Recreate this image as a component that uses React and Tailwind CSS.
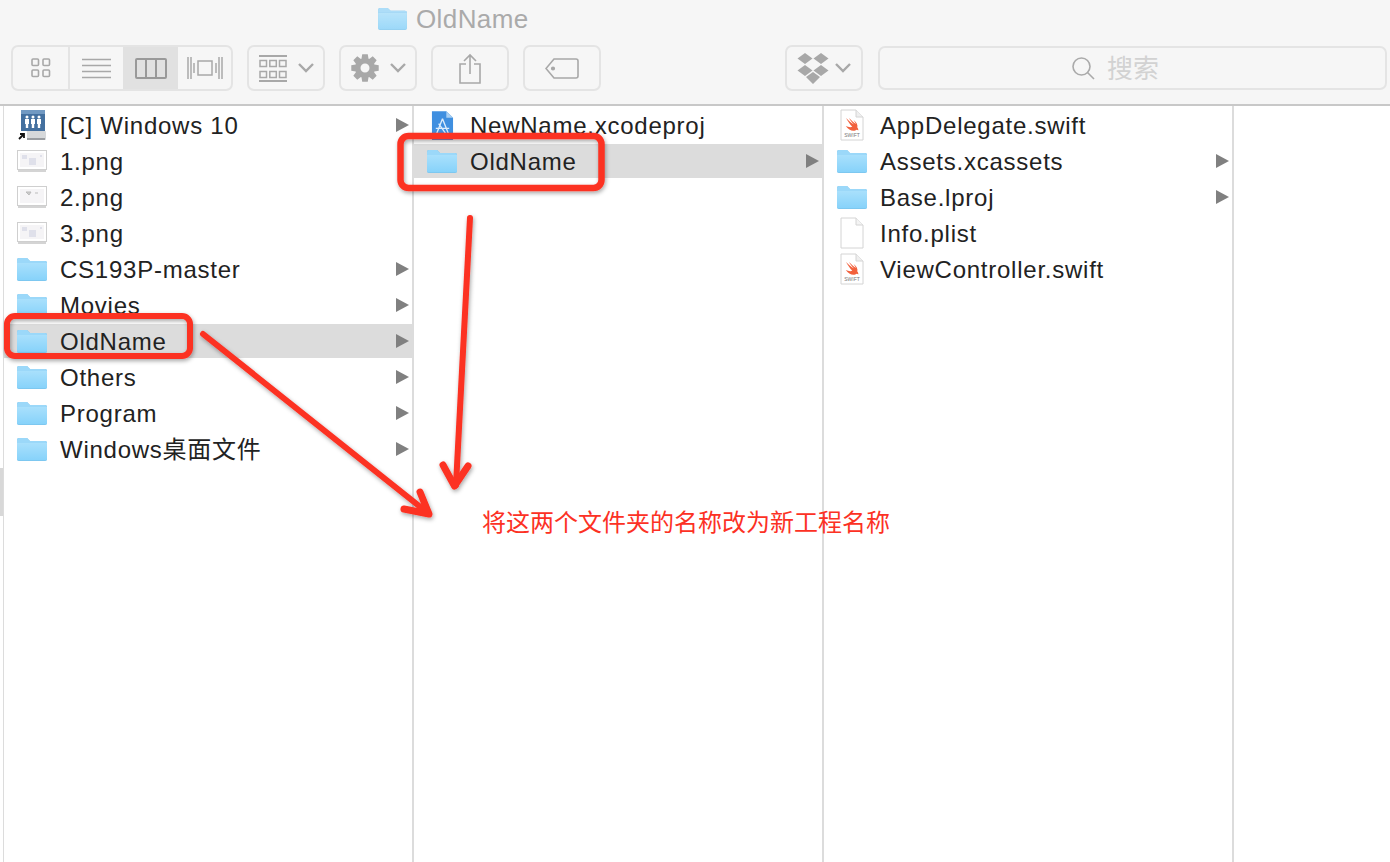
const font = "font-['Liberation_Sans','Noto_Sans_CJK_SC',sans-serif]"

const iconGray = "#a8a8a8"

function Folder({ className = "w-[32px] h-[25px]" }) {
    return (
        <svg viewBox="0 0 32 25" className={className}>
            <defs>
                <linearGradient id="folderBody" x1="0" y1="0" x2="0" y2="1">
                    <stop offset="0" stopColor="#a9e0fc" />
                    <stop offset="1" stopColor="#86d2fa" />
                </linearGradient>
            </defs>
            <path d="M1 3a2 2 0 0 1 2-2h8l3 3h15a2 2 0 0 1 2 2v16a2 2 0 0 1-2 2H3a2 2 0 0 1-2-2z" fill="#74bde6" />
            <path d="M1 6h30v16a1.500 1.500 0 0 1-1.500 1.500h-27A1.500 1.500 0 0 1 1 22z" fill="url(#folderBody)" />
            <path d="M1 3a2 2 0 0 1 2-2h8l3 3h15a2 2 0 0 1 2 2H1z" fill="#9bd8f9" />
        </svg>
    )
}

function Thumb({ variant }) {
    return (
        <svg viewBox="0 0 30 24" className="w-[30px] h-[24px]">
            <rect x="0.500" y="1.500" width="29" height="19" fill="#fff" stroke="#cfcfcf" />
            <rect x="1" y="21" width="28" height="2" fill="#aaa" opacity="0.5" />
            <rect x="3" y="4" width="24" height="14" fill="#f5f4f6" />
            {variant === 2 ? (
                <path d="M9 7h5l-2 3zM18 8h3" stroke="#bbb" fill="#ccc" />
            ) : (
                <path d="M5 6h5v4H5zM12 9h7v7h-7zM23 6h2v2h-2z" fill="#dfe0ea" />
            )}
        </svg>
    )
}

function DriveIcon() {
    return (
        <svg viewBox="0 0 30 32" className="w-[30px] h-[32px]">
            <rect x="4" y="1" width="24" height="23" rx="1" fill="#44709f" />
            <rect x="4" y="1" width="24" height="4" fill="#7199c2" />
            <g fill="#fff">
                <circle cx="10" cy="8" r="1.500" />
                <circle cx="16" cy="8" r="1.500" />
                <circle cx="22" cy="8" r="1.500" />
                <path d="M8 10h4v5h-.800v4h-2.400v-4H8zM14 10h4v5h-.800v4h-2.400v-4H14zM20 10h4v5h-.800v4h-2.400v-4H20z" />
            </g>
            <rect x="3" y="22" width="26" height="9" rx="1" fill="#d6d8da" />
            <rect x="4" y="29" width="24" height="2" fill="#9a9da1" />
            <rect x="0" y="22" width="10" height="10" rx="1" fill="#fff" />
            <path d="M2 30l4-4M3 25h4v4" stroke="#111" strokeWidth="1.800" fill="none" />
        </svg>
    )
}

function SwiftFile() {
    return (
        <svg viewBox="0 0 24 32" className="w-[24px] h-[32px]">
            <path d="M1 1h15l7 7v23H1z" fill="#fff" stroke="#d4d4d4" />
            <path d="M16 1v7h7" fill="#efefef" stroke="#d4d4d4" />
            <path d="M6 9c3 3 5 5 8 6.500-2.500-2.500-4-4.500-5-6.500 3 3 5 5 7 6-.800-1.500-1.500-2.500-2.500-4 3 2 4.500 5 3.800 7.500 1 1 1 2 1 3-1-1-2-1-3 0-3 1-7-.500-9.500-4.500 2 1 4.500 1.500 6.500.800C10 15.500 8 12.500 6 9z" fill="#f2603c" />
            <text x="12" y="28" textAnchor="middle" fontSize="5" fill="#777" fontFamily="Liberation Sans">SWIFT</text>
        </svg>
    )
}

function PlainFile() {
    return (
        <svg viewBox="0 0 24 32" className="w-[24px] h-[32px]">
            <path d="M1 1h15l7 7v23H1z" fill="#fff" stroke="#d4d4d4" />
            <path d="M16 1v7h7" fill="#f4f4f4" stroke="#d4d4d4" />
        </svg>
    )
}

function XcodeFile() {
    return (
        <svg viewBox="0 0 24 32" className="w-[23px] h-[31px]">
            <path d="M1 1h15l7 7v23H1z" fill="#3f8fe0" />
            <path d="M16 1v7h7z" fill="#a9cff2" />
            <path d="M12 9l-6 15M12 9l6 15M5 19h14M8 14l7 10" stroke="#dcecfb" strokeWidth="1.400" fill="none" />
        </svg>
    )
}

function Chevron() {
    return (
        <svg width="16" height="10" viewBox="0 0 16 10" fill="none" stroke={iconGray} strokeWidth="2.400" className="shrink-0">
            <path d="M1 1l7 7 7-7" />
        </svg>
    )
}

// 8 teeth gear, outer and inner radius alternate around the center
const gearPoints = Array.from({ length: 8 }).flatMap((_, i) => {
    const a = (i * Math.PI) / 4
    const spots = [
        [10, a - 0.36],
        [14, a - 0.2],
        [14, a + 0.2],
        [10, a + 0.36],
    ]
    return spots.map(([r, t]) => `${(14 + r * Math.sin(t)).toFixed(2)} ${(14 - r * Math.cos(t)).toFixed(2)}`)
})
const gearPath = `M${gearPoints.join("L")}zM14 9.500a4.500 4.500 0 1 0 0 9 4.500 4.500 0 0 0 0-9z`

function Row({ icon, name, arrow, selected }) {
    return (
        <div className={`flex items-center h-[34px] pl-[12px] pr-[3px] ${selected ? "bg-[#dcdcdc]" : ""}`}>
            <div className="flex justify-center shrink-0 w-[32px]">{icon}</div>
            <span className="ml-[12px] pt-[2px] text-[24px] tracking-[0.75px] leading-none text-[#222] whitespace-nowrap">{name}</span>
            {arrow && (
                <span className="ml-auto w-0 h-0 border-y-[7px] border-y-transparent border-l-[13px] border-l-[#808080]" />
            )}
        </div>
    )
}

const col1 = [
    { icon: <DriveIcon />, name: "[C] Windows 10", arrow: true },
    { icon: <Thumb variant={1} />, name: "1.png" },
    { icon: <Thumb variant={2} />, name: "2.png" },
    { icon: <Thumb variant={3} />, name: "3.png" },
    { icon: <Folder />, name: "CS193P-master", arrow: true },
    { icon: <Folder />, name: "Movies", arrow: true },
    { icon: <Folder />, name: "OldName", arrow: true, selected: true },
    { icon: <Folder />, name: "Others", arrow: true },
    { icon: <Folder />, name: "Program", arrow: true },
    { icon: <Folder />, name: "Windows桌面文件", arrow: true },
]

const col2 = [
    { icon: <XcodeFile />, name: "NewName.xcodeproj" },
    { icon: <Folder />, name: "OldName", arrow: true, selected: true },
]

const col3 = [
    { icon: <SwiftFile />, name: "AppDelegate.swift" },
    { icon: <Folder />, name: "Assets.xcassets", arrow: true },
    { icon: <Folder />, name: "Base.lproj", arrow: true },
    { icon: <PlainFile />, name: "Info.plist" },
    { icon: <SwiftFile />, name: "ViewController.swift" },
]

function Column({ rows }) {
    return (
        <div className="w-[410px] shrink-0 border-r-2 border-[#dcdcdc] pt-[2px] flex flex-col gap-[2px]">
            {rows.map((r) => (
                <Row key={r.name} {...r} />
            ))}
        </div>
    )
}

function ToolButton({ children, className = "" }) {
    return (
        <div className={`w-[78px] h-[46px] shrink-0 rounded-[7px] border-2 border-[#e4e4e4] bg-[#f6f6f6] flex items-center justify-center ${className}`}>
            {children}
        </div>
    )
}

export default function App() {
    return (
        <div className={`relative w-[1390px] h-[862px] overflow-hidden bg-white ${font}`}>
            {/* toolbar */}
            <div className="h-[106px] bg-[#f6f6f6] border-b-2 border-[#c8c8c8]">
                <div className="h-[38px] flex items-center pl-[377px]">
                    <Folder className="w-[31px] h-[24px] opacity-80" />
                    <span className="ml-[8px] text-[26px] tracking-[0.4px] text-[#aaaaaa] leading-none">OldName</span>
                </div>
                <div className="flex items-center mt-[7px] pl-[11px]">
                    <div className="flex w-[222px] h-[46px] rounded-[7px] border-2 border-[#e4e4e4] overflow-hidden">
                        <div className="w-[57px] border-r-2 border-[#e4e4e4] flex items-center justify-center">
                            <svg width="20" height="20" viewBox="0 0 20 20" fill="none" stroke={iconGray} strokeWidth="1.600">
                                <rect x="1" y="1" width="6.500" height="6.500" rx="1" />
                                <rect x="12" y="1" width="6.500" height="6.500" rx="1" />
                                <rect x="1" y="12" width="6.500" height="6.500" rx="1" />
                                <rect x="12" y="12" width="6.500" height="6.500" rx="1" />
                            </svg>
                        </div>
                        <div className="w-[53px] flex items-center justify-center">
                            <svg width="29" height="21" viewBox="0 0 29 21" stroke={iconGray} strokeWidth="1.600">
                                <path d="M0 1.500h29M0 7.500h29M0 13.500h29M0 19.500h29" />
                            </svg>
                        </div>
                        <div className="w-[55px] bg-[#e1e1e1] flex items-center justify-center">
                            <svg width="32" height="21" viewBox="0 0 32 21" fill="none" stroke="#999" strokeWidth="2">
                                <rect x="1" y="1" width="30" height="19" rx="1" />
                                <path d="M11 1v19M21 1v19" />
                            </svg>
                        </div>
                        <div className="flex-1 flex items-center justify-center">
                            <svg width="36" height="22" viewBox="0 0 36 22" fill="none" stroke={iconGray} strokeWidth="1.500">
                                <rect x="11" y="4" width="14" height="14" />
                                <path d="M1 0v22M4 0v22M35 0v22M32 0v22M7 6v10M29 6v10" />
                            </svg>
                        </div>
                    </div>
                    <ToolButton className="ml-[14px] gap-[11px]">
                        <svg width="28" height="27" viewBox="0 0 28 27" fill="none" stroke={iconGray} strokeWidth="1.500">
                            <path d="M0 1h28M0 26h28" strokeWidth="1.800" />
                            <rect x="1" y="5.500" width="6.500" height="6" />
                            <rect x="10.800" y="5.500" width="6.500" height="6" />
                            <rect x="20.500" y="5.500" width="6.500" height="6" />
                            <rect x="1" y="16.500" width="6.500" height="6" />
                            <rect x="10.800" y="16.500" width="6.500" height="6" />
                            <rect x="20.500" y="16.500" width="6.500" height="6" />
                        </svg>
                        <Chevron />
                    </ToolButton>
                    <ToolButton className="ml-[14px] gap-[11px]">
                        <svg width="28" height="28" viewBox="0 0 28 28" fill={iconGray}>
                            <path fillRule="evenodd" d={gearPath} />
                        </svg>
                        <Chevron />
                    </ToolButton>
                    <ToolButton className="ml-[14px]">
                        <svg width="22" height="31" viewBox="0 0 22 31" fill="none" stroke={iconGray} strokeWidth="1.600">
                            <path d="M7 11H1v19h20V11h-6M11 21V2M5 8l6-6 6 6" />
                        </svg>
                    </ToolButton>
                    <ToolButton className="ml-[14px]">
                        <svg width="34" height="21" viewBox="0 0 34 21" fill="none" stroke={iconGray} strokeWidth="1.600">
                            <path d="M9 1h22a2 2 0 0 1 2 2v15a2 2 0 0 1-2 2H9l-8-9.500z" />
                            <circle cx="8" cy="10.500" r="1.300" fill={iconGray} />
                        </svg>
                    </ToolButton>
                    <ToolButton className="ml-[184px] gap-[6px]">
                        <svg width="32" height="31" viewBox="0 0 32 31" fill={iconGray}>
                            <path d="M8 0l7.500 5.500L8 11 .500 5.500zM24 0l7.500 5.500L24 11l-7.500-5.500zM8 12l7.500 5.500L8 23 .500 17.500zM24 12l7.500 5.500L24 23l-7.500-5.500zM16 19l7 5-7 7-7-7z" />
                        </svg>
                        <Chevron />
                    </ToolButton>
                    <div className="ml-[15px] w-[509px] h-[44px] rounded-[7px] border-2 border-[#e4e4e4] flex items-center justify-center pr-[34px]">
                        <svg width="23" height="23" viewBox="0 0 23 23" fill="none" stroke="#aaa" strokeWidth="1.600">
                            <circle cx="9.500" cy="9.500" r="8.500" />
                            <path d="M15.500 15.500L22 22" />
                        </svg>
                        <span className="ml-[12px] pt-[2px] text-[26px] leading-none text-[#d2d2d2]">搜索</span>
                    </div>
                </div>
            </div>

            {/* columns */}
            <div className="flex h-[756px] pl-[3px]">
                <div className="w-[1px] bg-[#dcdcdc] shrink-0" />
                <Column rows={col1} />
                <Column rows={col2} />
                <Column rows={col3} />
            </div>

            {/* scroller bit in the left gutter */}
            <div className="absolute left-0 top-[468px] w-[3px] h-[48px] bg-[#d8d8d8]" />

            {/* annotation on top of the screenshot */}
            <svg className="absolute inset-0" width="1390" height="862" fill="none" stroke="#fc3124">
                <defs>
                    <filter id="annoShadow" x="-10%" y="-10%" width="120%" height="120%">
                        <feDropShadow dx="1" dy="2" stdDeviation="2" floodColor="#000" floodOpacity="0.35" />
                    </filter>
                </defs>
                <g filter="url(#annoShadow)" strokeLinecap="round" strokeLinejoin="round">
                    <rect x="7" y="316" width="183" height="40" rx="8" strokeWidth="6" />
                    <rect x="400.500" y="136" width="201" height="52" rx="8" strokeWidth="6.500" />
                    <path d="M203 334L428 513" strokeWidth="6" />
                    <path d="M404 509L429 514L420 492" strokeWidth="7" />
                    <path d="M470 218L456 485" strokeWidth="6" />
                    <path d="M443 465L454.500 486L468 466" strokeWidth="7" />
                </g>
            </svg>
            <span className="absolute left-[482px] top-[511px] text-[24px] leading-none text-[#fc3124] whitespace-nowrap">将这两个文件夹的名称改为新工程名称</span>
        </div>
    )
}
